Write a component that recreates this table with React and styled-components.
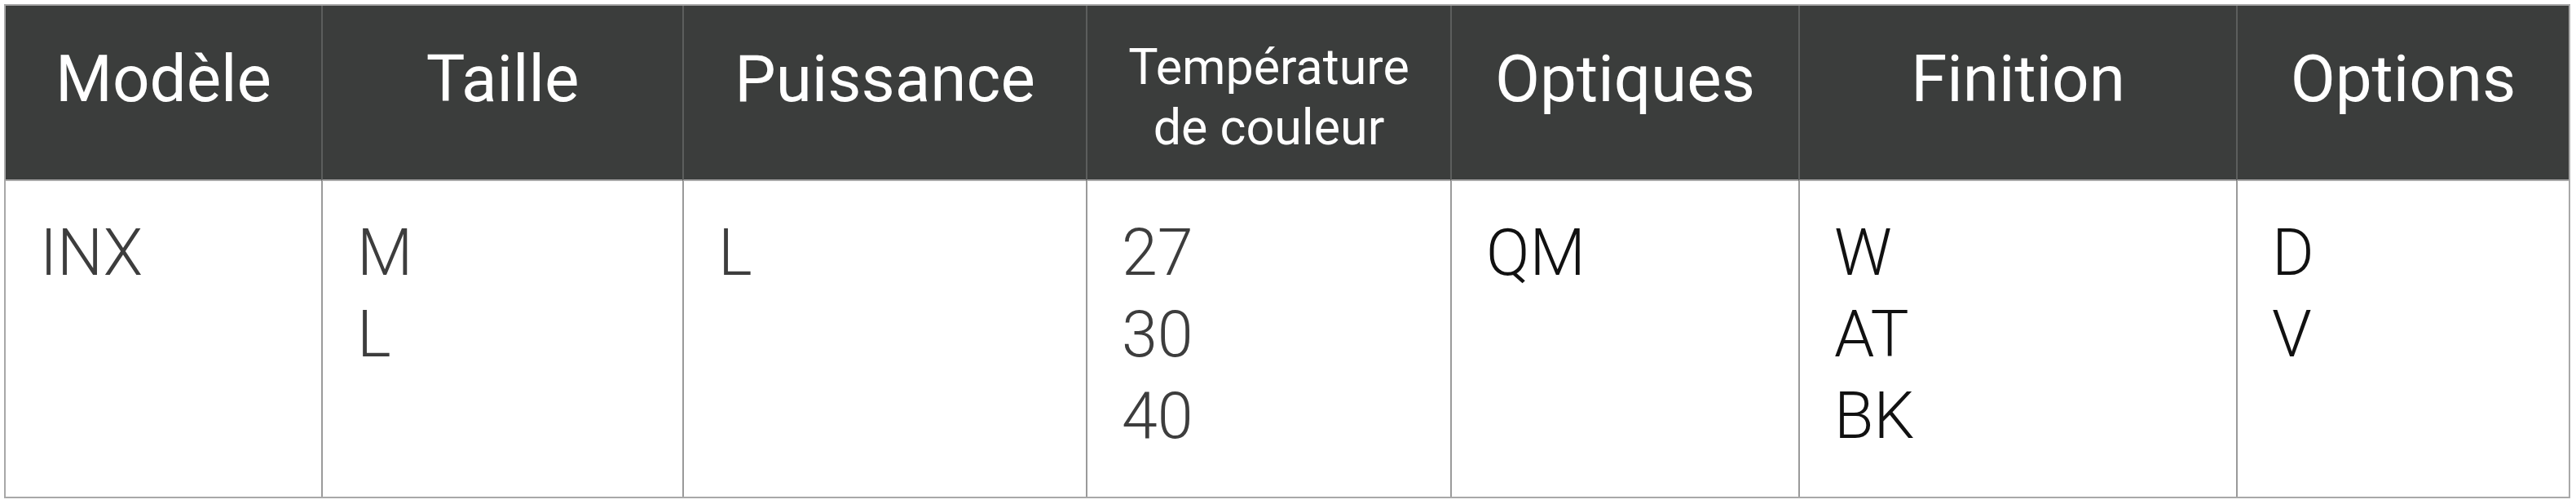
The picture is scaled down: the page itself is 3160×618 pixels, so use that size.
import React from 'react';
import styled, { createGlobalStyle } from 'styled-components';

const GlobalStyle = createGlobalStyle`
  html, body {
    margin: 0;
    padding: 0;
    background: #ffffff;
  }
  body {
    font-family: Roboto, 'Liberation Sans', sans-serif;
  }
`;

const COLUMNS = [
  { title: 'Modèle', width: 387, values: ['INX'], tone: 'grey' },
  { title: 'Taille', width: 443, values: ['M', 'L'], tone: 'grey' },
  { title: 'Puissance', width: 495, values: ['L'], tone: 'grey' },
  { title: ['Température', 'de couleur'], width: 447, values: ['27', '30', '40'], tone: 'grey' },
  { title: 'Optiques', width: 427, values: ['QM'], tone: 'black' },
  { title: 'Finition', width: 537, values: ['W', 'AT', 'BK'], tone: 'black' },
  { title: 'Options', width: 408, values: ['D', 'V'], tone: 'black' },
];

const Page = styled.div`
  padding: 5px 7px 0 5px;
`;

const Table = styled.table`
  width: 3148px;
  table-layout: fixed;
  border-collapse: separate;
  border-spacing: 0;
  border: 2px solid #a8a8a8;
`;

const HeadRow = styled.tr`
  height: 215px;
  background: #3b3d3c;
`;

const Th = styled.th`
  box-sizing: border-box;
  width: ${(p) => p.$w}px;
  padding: ${(p) => (p.$small ? '38px 6px 0' : '40px 10px 0')};
  vertical-align: top;
  text-align: center;
  color: #ffffff;
  font-weight: 400;
  font-size: ${(p) => (p.$small ? '61px' : '80px')};
  line-height: ${(p) => (p.$small ? '74px' : '100px')};
  border-bottom: 2px solid #a8a8a8;
  & + & {
    border-left: 2px solid #5c5e5d;
  }
`;

const BodyRow = styled.tr`
  height: 387px;
`;

const Td = styled.td`
  box-sizing: border-box;
  padding: 38px 20px 0 42px;
  vertical-align: top;
  text-align: left;
  font-size: 79px;
  line-height: 100px;
  font-weight: 300;
  color: ${(p) => (p.$tone === 'black' ? '#111111' : '#3d3d3d')};
  & + & {
    border-left: 2px solid #9a9a9a;
  }
`;

const Value = styled.div`
  white-space: nowrap;
`;

export default function App() {
  return (
    <>
      <GlobalStyle />
      <Page>
        <Table>
          <thead>
            <HeadRow>
              {COLUMNS.map((c, i) => (
                <Th key={i} $w={c.width} $small={Array.isArray(c.title)}>
                  {Array.isArray(c.title)
                    ? c.title.map((t) => <Value key={t}>{t}</Value>)
                    : c.title}
                </Th>
              ))}
            </HeadRow>
          </thead>
          <tbody>
            <BodyRow>
              {COLUMNS.map((c, i) => (
                <Td key={i} $tone={c.tone}>
                  {c.values.map((v) => (
                    <Value key={v}>{v}</Value>
                  ))}
                </Td>
              ))}
            </BodyRow>
          </tbody>
        </Table>
      </Page>
    </>
  );
}
